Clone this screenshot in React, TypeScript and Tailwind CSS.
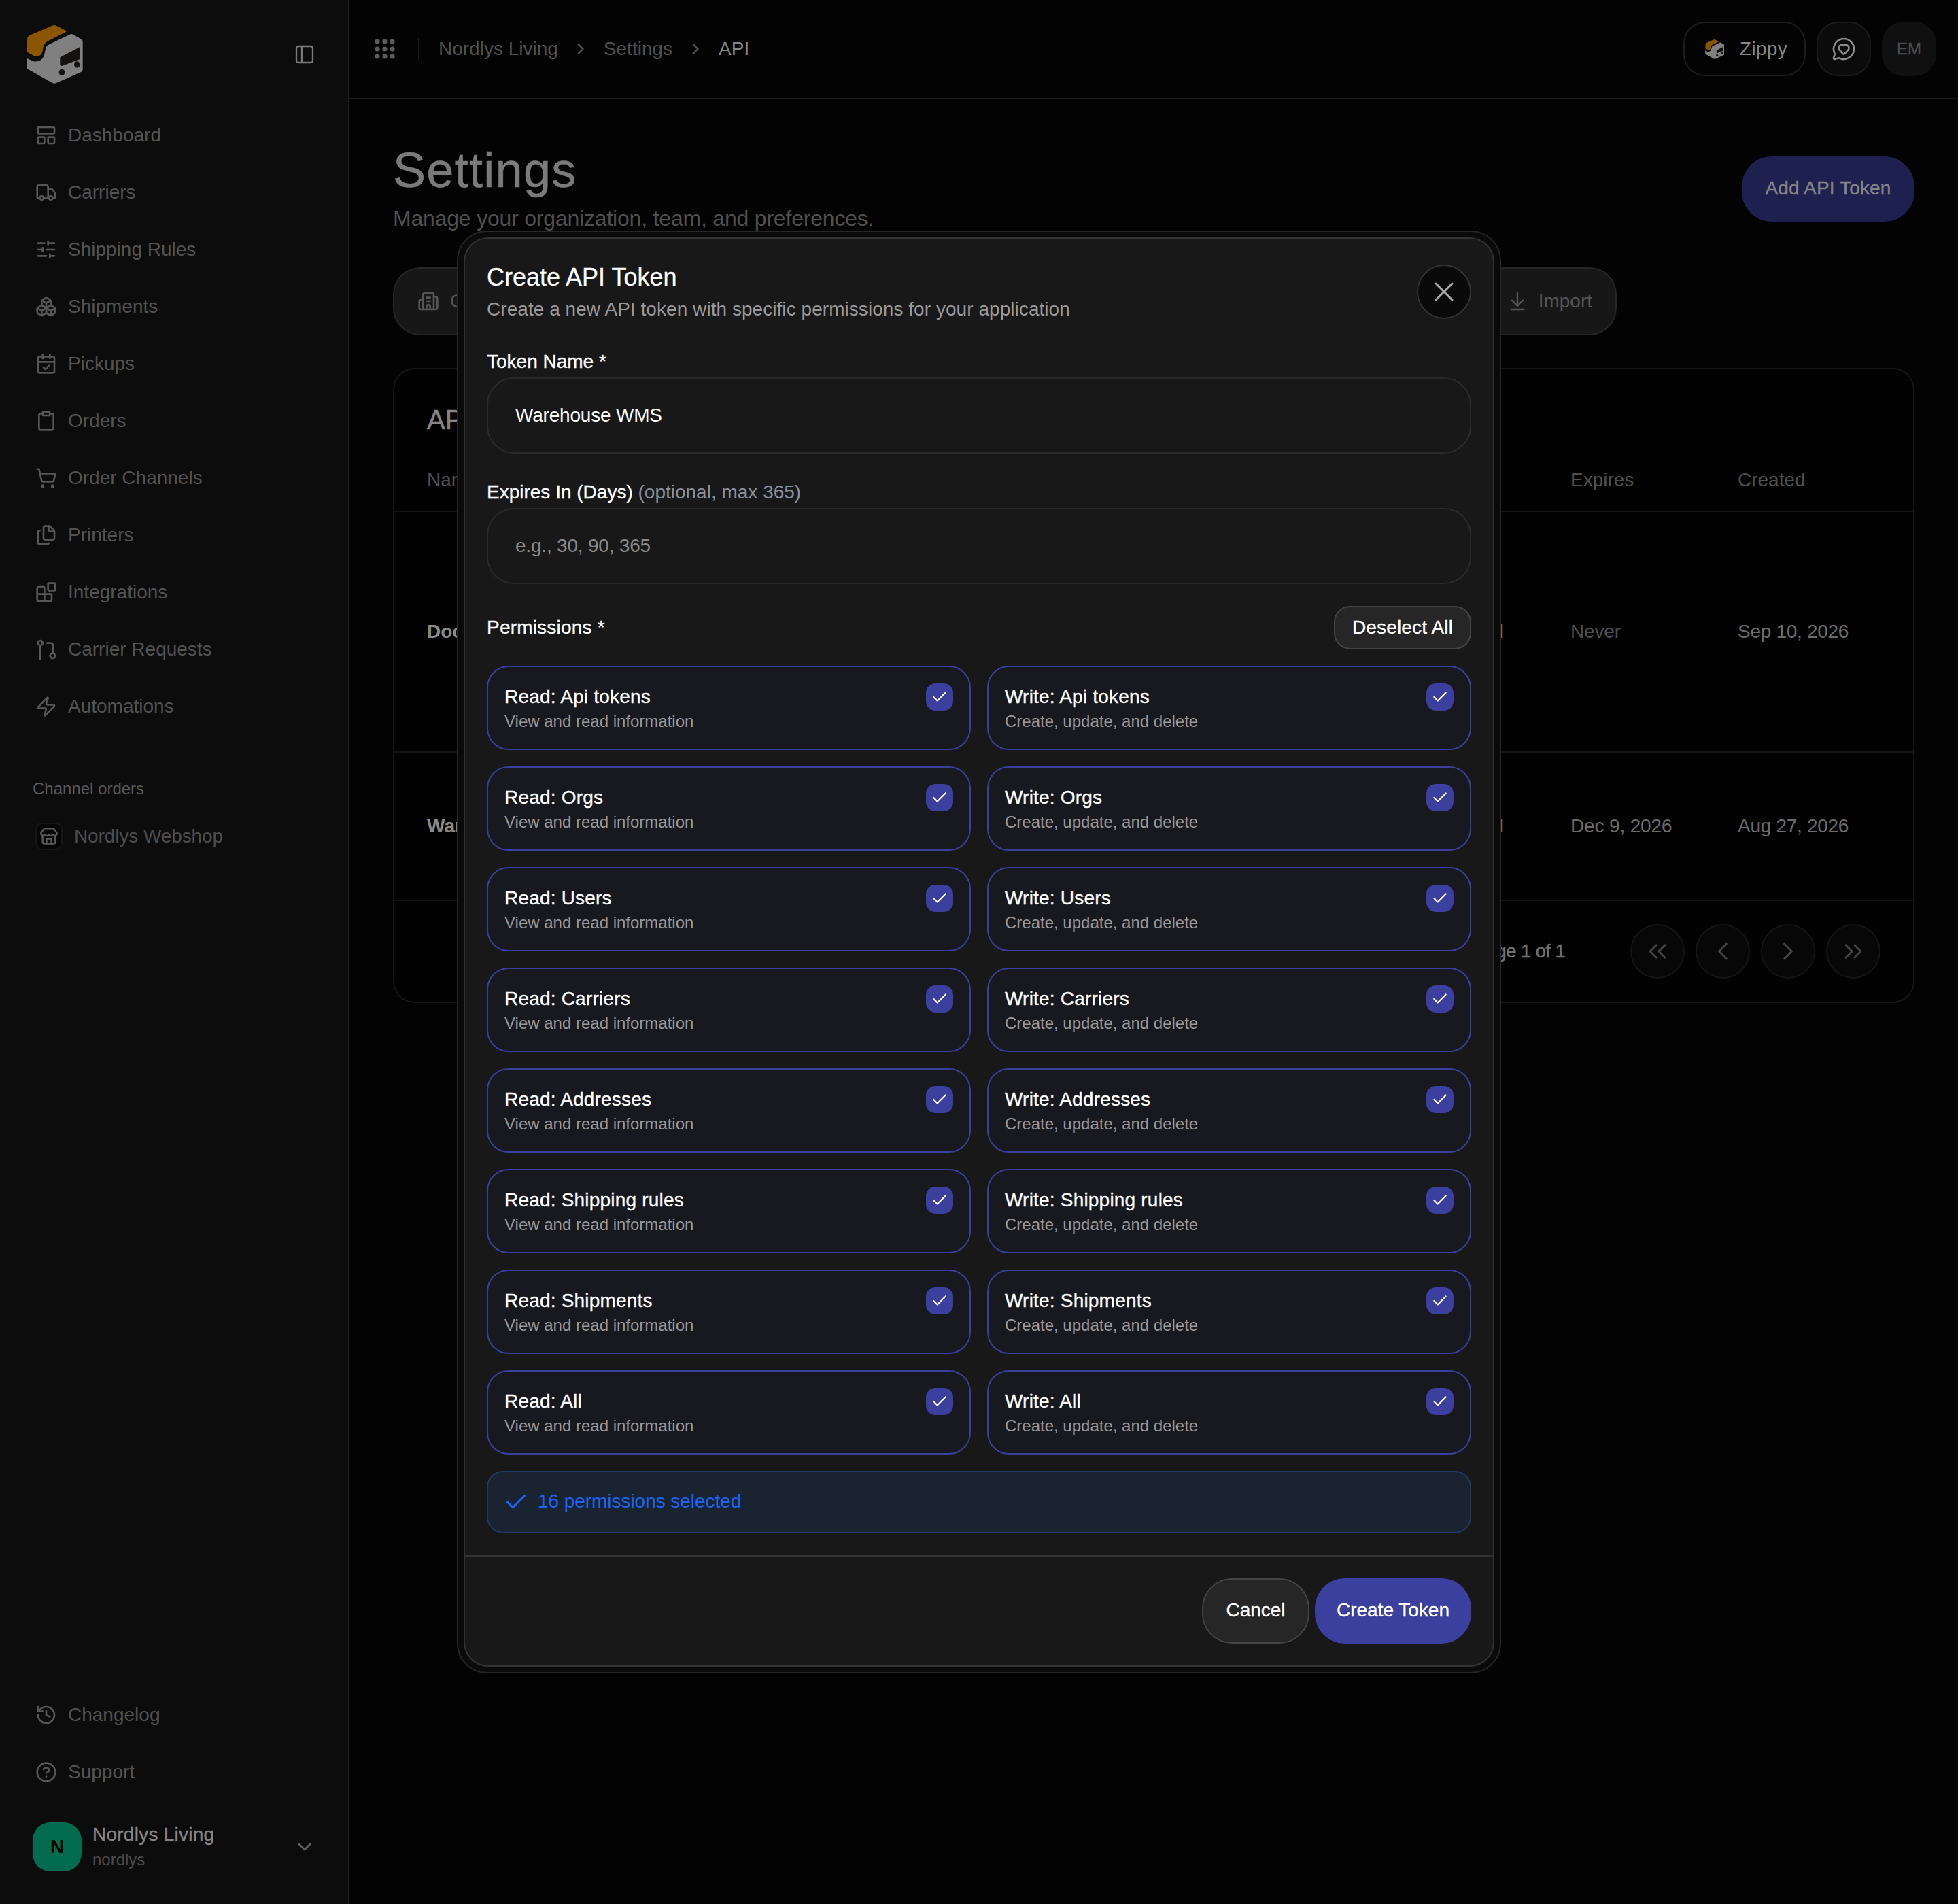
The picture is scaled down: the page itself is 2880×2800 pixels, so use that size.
import React from "react";
import {
  LayoutPanelTop, Truck, SlidersHorizontal, Boxes, CalendarCheck, Clipboard, ShoppingCart, Files, Blocks, Zap,
  Store, History, CircleHelp, ChevronDown, ChevronRight, PanelLeft, MessageCircleHeart, ArrowDownToLine, Building2,
  ChevronsLeft, ChevronLeft, ChevronsRight, Check, X,
} from "lucide-react";

function Logo({ className }: { className: string }) {
  return (
    <svg viewBox="0 0 250 258" className={className} aria-hidden="true">
      <path d="M6 58 Q6 50 14 46 L115 2 Q125 -2 135 3 L176 24 Q180 28 174 31 L100 68 Q80 78 76 96 L72 118 Q66 140 40 138 L10 122 Q2 118 2 110 Z" fill="#8a5600" />
      <path d="M204 40 L246 63 Q250 66 250 74 L250 196 Q250 202 244 206 L132 256 Q125 258 118 256 L8 194 Q2 190 2 184 L2 146 L34 160 Q70 164 80 132 L86 104 Q88 92 102 85 L196 40 Q200 38 204 40 Z" fill="#808080" />
      <path d="M150 142 L238 96 L238 150 L158 180 Q150 180 150 172 Z" fill="#141210" />
      <ellipse cx="158" cy="208" rx="13" ry="14" fill="#141210" />
      <ellipse cx="225" cy="174" rx="13" ry="14" fill="#141210" />
    </svg>
  );
}

function RequestIcon({ size }: { size: number }) {
  return (
    <svg width={size} height={size} viewBox="0 0 24 24" fill="none" stroke="currentColor" strokeWidth="2" strokeLinecap="round" strokeLinejoin="round" aria-hidden="true">
      <circle cx="5.5" cy="5" r="2.6" />
      <path d="M5.5 7.6V23" />
      <path d="M13 5h4a2.5 2.5 0 0 1 2.5 2.5V16" />
      <circle cx="19" cy="19" r="2.8" />
    </svg>
  );
}

const nav: [string, React.ReactNode][] = [
  ["Dashboard", <LayoutPanelTop key="a" size={32} strokeWidth={2} />],
  ["Carriers", <Truck key="b" size={32} strokeWidth={2} />],
  ["Shipping Rules", <SlidersHorizontal key="c" size={32} strokeWidth={2} />],
  ["Shipments", <Boxes key="d" size={32} strokeWidth={2} />],
  ["Pickups", <CalendarCheck key="e" size={32} strokeWidth={2} />],
  ["Orders", <Clipboard key="f" size={32} strokeWidth={2} />],
  ["Order Channels", <ShoppingCart key="g" size={32} strokeWidth={2} />],
  ["Printers", <Files key="h" size={32} strokeWidth={2} />],
  ["Integrations", <Blocks key="i" size={32} strokeWidth={2} />],
  ["Carrier Requests", <RequestIcon key="j" size={32} />],
  ["Automations", <Zap key="k" size={32} strokeWidth={2} />],
];

function NavRow({ label, icon }: { label: string; icon: React.ReactNode }) {
  return (
    <div className="flex h-[84px] items-center gap-4 pl-[52px] text-[28px] text-[#525252]">
      <span className="flex w-8 shrink-0 text-[#565656]">{icon}</span>
      <span>{label}</span>
    </div>
  );
}

function Sidebar() {
  return (
    <aside className="flex h-[2800px] w-[514px] shrink-0 flex-col border-r-2 border-[#1c1c1c] bg-[#0c0c0c]">
      <div className="flex h-[157px] items-start justify-between pl-[38px] pr-[48px] pt-[37px]">
        <Logo className="h-[86px] w-[84px]" />
        <PanelLeft size={32} strokeWidth={1.75} className="mt-[27px] text-[#7a7a7a]" />
      </div>
      <nav className="flex flex-col">
        {nav.map(([label, icon]) => (
          <NavRow key={label} label={label} icon={icon} />
        ))}
      </nav>
      <div className="mt-[61px] pl-[48px] text-[24px] leading-[36px] text-[#595959]">Channel orders</div>
      <div className="mt-[14px] flex h-[76px] items-center gap-[17px] pl-[52px] text-[#4d4d4d]">
        <span className="flex h-[40px] w-[40px] items-center justify-center rounded-[10px] border-2 border-[#161616] bg-[#060606]">
          <Store size={28} strokeWidth={2} className="text-[#5a5a5a]" />
        </span>
        <span className="text-[28px] tracking-[-0.1px]">Nordlys Webshop</span>
      </div>
      <div className="mt-auto">
        <NavRow label="Changelog" icon={<History size={32} strokeWidth={2} />} />
        <NavRow label="Support" icon={<CircleHelp size={32} strokeWidth={2} />} />
        <div className="mb-[48px] mt-[31px] flex items-center pl-[48px] pr-[48px]">
          <div className="flex h-[72px] w-[72px] items-center justify-center rounded-[26px] bg-[#046c4e] text-[28px] font-bold text-black">N</div>
          <div className="ml-[16px] flex-1">
            <div className="text-[28px] leading-[38px] tracking-[0.25px] text-[#858585] [-webkit-text-stroke:0.35px]">Nordlys Living</div>
            <div className="mt-[1px] text-[24px] leading-[34px] text-[#4a4a4a]">nordlys</div>
          </div>
          <ChevronDown size={32} strokeWidth={2} className="text-[#606060]" />
        </div>
      </div>
    </aside>
  );
}

function TopBar() {
  return (
    <header className="flex h-[146px] items-center border-b-2 border-[#1c1c1c] bg-[#030303] pl-[37px] pr-[32px]">
      <svg width="30" height="30" viewBox="0 0 30 30" aria-hidden="true" fill="#5c5c5c">
        {[4, 15, 26].map((y) => [4, 15, 26].map((x) => <circle key={`${x}-${y}`} cx={x} cy={y} r="3.6" />))}
      </svg>
      <span className="ml-[34px] h-[32px] w-[2px] bg-[#1c1c1c]" />
      <div className="mb-[1px] ml-[28px] flex items-center text-[28px] text-[#4f4f4f]">
        <span>Nordlys Living</span>
        <ChevronRight size={28} strokeWidth={2} className="mx-[19.5px] text-[#555555]" />
        <span>Settings</span>
        <ChevronRight size={28} strokeWidth={2} className="mx-[20px] text-[#555555]" />
        <span className="text-[#858585]">API</span>
      </div>
      <div className="ml-auto flex items-center gap-4">
        <div className="flex h-[80px] w-[180px] items-center gap-[23px] rounded-[32px] border-2 border-[#1c1c1c] pl-[30px] text-[28px] tracking-[0.3px] text-[#858585]">
          <Logo className="h-[29px] w-[28px]" />
          <span>Zippy</span>
        </div>
        <div className="flex h-[80px] w-[80px] items-center justify-center rounded-[32px] border-2 border-[#1a1a1a] bg-[#0b0b0b] text-[#8c8c8c]">
          <MessageCircleHeart size={36} strokeWidth={1.75} />
        </div>
        <div className="flex h-[80px] w-[80px] items-center justify-center rounded-[32px] bg-[#101010] text-[24px] text-[#4c4c4c] [-webkit-text-stroke:0.35px]">EM</div>
      </div>
    </header>
  );
}

function Row({ name, used, expires, created, height, expiresDim }: { name: string; used: string; expires: string; created: string; height: string; expiresDim?: boolean }) {
  return (
    <div className={`flex items-center border-b-2 border-[#121212] pl-[48px] pr-0 text-[28px] ${height}`}>
      <div className="flex-1 font-bold text-[#8a8a8a]">{name}</div>
      <div className="mr-[98px] text-[#666666]">{used}</div>
      <div className={`w-[246px] tracking-[-0.15px] ${expiresDim ? "text-[#4f4f4f]" : "text-[#6b6b6b]"}`}>{expires}</div>
      <div className="w-[258px] tracking-[-0.3px] text-[#6b6b6b]">{created}</div>
    </div>
  );
}

function PageBtn({ children }: { children: React.ReactNode }) {
  return <div className="flex h-[80px] w-[80px] items-center justify-center rounded-full border-2 border-[#141414] bg-[#070707] text-[#464646]">{children}</div>;
}

function Main() {
  return (
    <main className="flex min-w-0 flex-1 flex-col bg-[#030303]">
      <TopBar />
      <div className="px-[64px] pt-[64px]">
        <div className="flex items-center justify-between">
          <div>
            <h1 className="text-[72px] leading-[80px] tracking-[1.3px] text-[#7b7b7b] [-webkit-text-stroke:0.6px]">Settings</h1>
            <p className="mt-[7px] text-[32px] leading-[48px] tracking-[-0.2px] text-[#4f4f4f]">Manage your organization, team, and preferences.</p>
          </div>
          <div className="flex h-[96px] w-[254px] items-center justify-center rounded-[44px] bg-[#1e2050] pb-[2px] text-[28px] tracking-[0.15px] text-[#858585] [-webkit-text-stroke:0.35px]">Add API Token</div>
        </div>
        <div className="mt-[48px] flex h-[100px] w-[1800px] items-center justify-between rounded-[40px] border-2 border-[#262626] bg-[#171717] pl-[34px] pr-[34px] text-[28px] text-[#555555]">
          <div className="flex items-center gap-[16px]">
            <Building2 size={32} strokeWidth={2} />
            <span>Company</span>
          </div>
          <div className="flex items-center gap-[15px]">
            <ArrowDownToLine size={32} strokeWidth={1.75} />
            <span>Import</span>
          </div>
        </div>
        <section className="mt-[48px] flex h-[934px] flex-col rounded-[32px] border-2 border-[#161616] bg-[#020202]">
          <h2 className="pl-[48px] pt-[46px] text-[40px] leading-[56px] text-[#858585] [-webkit-text-stroke:0.5px]">API Tokens</h2>
          <div className="flex h-[108px] items-center border-b-2 border-[#121212] pb-[2px] pl-[48px] pt-[18px] text-[28px] text-[#4f4f4f]">
            <div className="flex-1">Name</div>
            <div className="w-[246px]">Expires</div>
            <div className="w-[258px]">Created</div>
          </div>
          <Row name="Dock Scanner" used="Never used" expires="Never" created="Sep 10, 2026" height="h-[354px]" expiresDim />
          <Row name="Warehouse WMS" used="Never used" expires="Dec 9, 2026" created="Aug 27, 2026" height="h-[218px]" />
          <div className="flex flex-1 items-center justify-end pr-[48px]">
            <span className="mr-[96px] text-[28px] tracking-[-0.8px] text-[#707070] [-webkit-text-stroke:0.3px]">Page 1 of 1</span>
            <div className="flex gap-4">
              <PageBtn><ChevronsLeft size={44} strokeWidth={1.5} /></PageBtn>
              <PageBtn><ChevronLeft size={44} strokeWidth={1.5} /></PageBtn>
              <PageBtn><ChevronRight size={44} strokeWidth={1.5} /></PageBtn>
              <PageBtn><ChevronsRight size={44} strokeWidth={1.5} /></PageBtn>
            </div>
          </div>
        </section>
      </div>
    </main>
  );
}

const resources = ["Api tokens", "Orgs", "Users", "Carriers", "Addresses", "Shipping rules", "Shipments", "All"];

function PermCard({ title, sub }: { title: string; sub: string }) {
  return (
    <div className="flex h-[124px] justify-between rounded-[32px] border-2 border-[#3a3f9e] bg-[#18181f] pl-[24px] pr-[24px]">
      <div className="pt-[24px]">
        <div className="text-[28px] leading-[40px] tracking-[0.2px] text-white [-webkit-text-stroke:0.35px]">{title}</div>
        <div className="mt-[-1px] text-[24px] leading-[34px] text-[#999999]">{sub}</div>
      </div>
      <div className="mt-[24px] flex h-[40px] w-[40px] items-center justify-center rounded-[14px] bg-[#3b3f9e] text-white">
        <Check size={26} strokeWidth={2} />
      </div>
    </div>
  );
}

function Modal() {
  return (
    <div className="absolute inset-0 flex items-center justify-center">
      <div className="w-[1536px] rounded-[44px] border-2 border-[#262626] bg-[#0a0a0a] p-2">
        <div className="rounded-[36px] border-2 border-[#333333] bg-[#181818]">
          <div className="px-[32px] pt-[33px]">
            <div className="flex items-start justify-between">
              <div>
                <h2 className="text-[36px] leading-[48px] text-white [-webkit-text-stroke:0.3px]">Create API Token</h2>
                <p className="mt-[3px] text-[28px] leading-[40px] tracking-[0.05px] text-[#999999]">Create a new API token with specific permissions for your application</p>
              </div>
              <div className="mt-[5px] flex h-[80px] w-[80px] items-center justify-center rounded-full border-2 border-[#333333] bg-[#0a0a0a] text-[#aaaaaa]">
                <X size={48} strokeWidth={1.5} />
              </div>
            </div>
            <label className="mt-[37px] block text-[28px] leading-[40px] text-white [-webkit-text-stroke:0.35px]">Token Name *</label>
            <input readOnly value="Warehouse WMS" className="mt-[3px] block h-[112px] w-full rounded-[40px] border-2 border-[#2a2a2a] bg-transparent px-[40px] text-[28px] tracking-[-0.2px] text-white outline-none" />
            <label className="mt-[37px] block text-[28px] leading-[40px] text-white">
              <span className="[-webkit-text-stroke:0.35px]">Expires In (Days)</span> <span className="text-[#8a8f9c]">(optional, max 365)</span>
            </label>
            <input readOnly placeholder="e.g., 30, 90, 365" className="mt-[3px] block h-[112px] w-full rounded-[40px] border-2 border-[#2a2a2a] bg-transparent px-[40px] text-[28px] tracking-[-0.2px] text-white outline-none placeholder:text-[#8a8a8a]" />
            <div className="mt-[32px] flex h-[64px] items-center justify-between">
              <span className="text-[28px] tracking-[0.2px] text-white [-webkit-text-stroke:0.35px]">Permissions *</span>
              <div className="flex h-[64px] w-[202px] items-center justify-center rounded-[24px] border-2 border-[#444444] bg-[#262626] pb-[1px] text-[28px] tracking-[0.15px] text-white [-webkit-text-stroke:0.35px]">Deselect All</div>
            </div>
            <div className="mt-[24px] grid grid-cols-2 gap-6">
              {resources.map((r) => (
                <React.Fragment key={r}>
                  <PermCard title={`Read: ${r}`} sub="View and read information" />
                  <PermCard title={`Write: ${r}`} sub="Create, update, and delete" />
                </React.Fragment>
              ))}
            </div>
            <div className="mt-[24px] flex h-[92px] items-center gap-[13px] rounded-[24px] border-2 border-[#1e3a64] bg-[#1a2430] pl-[22px] text-[28px] text-[#1d63f5]">
              <Check size={38} strokeWidth={2} />
              <span className="mb-[2px] tracking-[-0.05px]">16 permissions selected</span>
            </div>
          </div>
          <div className="mt-[32px] flex justify-end gap-2 border-t-2 border-[#333333] px-[32px] py-[32px]">
            <div className="flex h-[96px] w-[158px] items-center justify-center rounded-[44px] border-2 border-[#444444] bg-[#262626] pb-[2px] text-[28px] text-white [-webkit-text-stroke:0.35px]">Cancel</div>
            <div className="flex h-[96px] w-[230px] items-center justify-center rounded-[44px] bg-[#3b3f9e] pb-[2px] text-[28px] text-white [-webkit-text-stroke:0.35px]">Create Token</div>
          </div>
        </div>
      </div>
    </div>
  );
}

export default function App() {
  return (
    <div className="relative flex h-[2800px] w-[2880px] overflow-hidden bg-black font-['Liberation_Sans',sans-serif]">
      <Sidebar />
      <Main />
      <Modal />
    </div>
  );
}
